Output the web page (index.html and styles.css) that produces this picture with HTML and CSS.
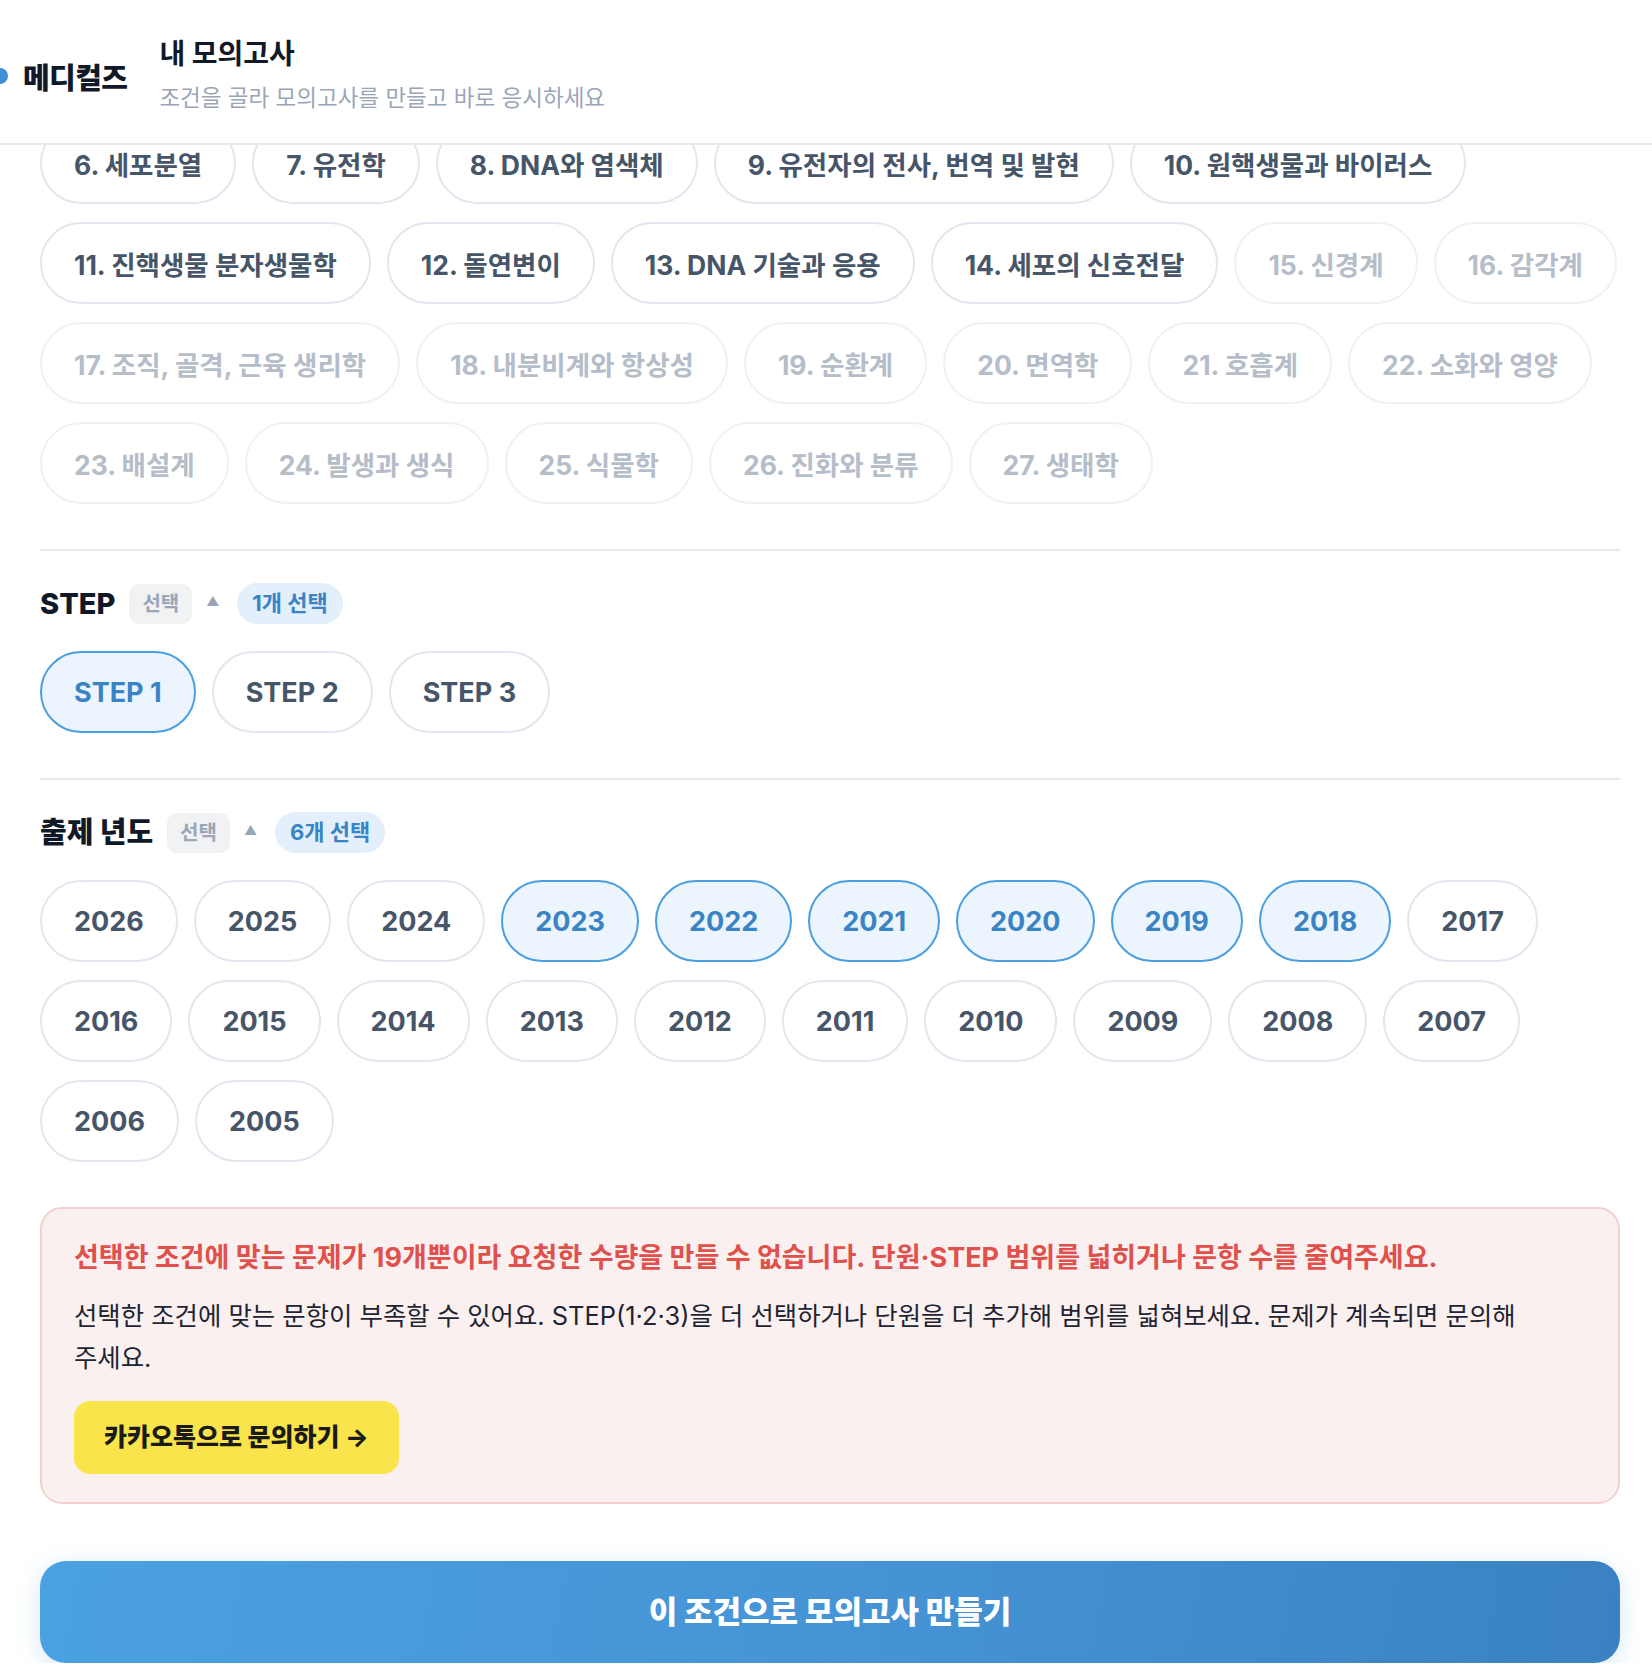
FILE: index.html
```html
<!DOCTYPE html>
<html lang="ko">
<head>
    <meta charset="UTF-8">
    <meta name="viewport" content="width=device-width, initial-scale=1.0">
    <title>내 모의고사 - 메디컬즈</title>
    <link rel="stylesheet" href="styles.css">
</head>
<body>

    <!-- 상단 바 -->
    <header class="topbar">
        <div class="brand">
            <span class="brand-dot"></span>
            <span class="brand-name">메디컬즈</span>
        </div>
        <div class="page-head">
            <h1 class="page-title">내 모의고사</h1>
            <p class="page-sub">조건을 골라 모의고사를 만들고 바로 응시하세요</p>
        </div>
    </header>

    <main class="content">

        <!-- 단원 목록 -->
        <div class="chip-grid">
            <button class="chip">6. 세포분열</button>
            <button class="chip">7. 유전학</button>
            <button class="chip">8. DNA와 염색체</button>
            <button class="chip">9. 유전자의 전사, 번역 및 발현</button>
            <button class="chip">10. 원핵생물과 바이러스</button>
            <button class="chip">11. 진핵생물 분자생물학</button>
            <button class="chip">12. 돌연변이</button>
            <button class="chip">13. DNA 기술과 응용</button>
            <button class="chip">14. 세포의 신호전달</button>
            <button class="chip is-off">15. 신경계</button>
            <button class="chip is-off">16. 감각계</button>
            <button class="chip is-off">17. 조직, 골격, 근육 생리학</button>
            <button class="chip is-off">18. 내분비계와 항상성</button>
            <button class="chip is-off">19. 순환계</button>
            <button class="chip is-off">20. 면역학</button>
            <button class="chip is-off">21. 호흡계</button>
            <button class="chip is-off">22. 소화와 영양</button>
            <button class="chip is-off">23. 배설계</button>
            <button class="chip is-off">24. 발생과 생식</button>
            <button class="chip is-off">25. 식물학</button>
            <button class="chip is-off">26. 진화와 분류</button>
            <button class="chip is-off">27. 생태학</button>
        </div>

        <!-- STEP 선택 -->
        <section class="filter">
            <div class="filter-head">
                <h2 class="filter-title">STEP</h2>
                <span class="tag-muted">선택</span>
                <span class="caret">▲</span>
                <span class="tag-count">1개 선택</span>
            </div>
            <div class="chip-grid">
                <button class="chip is-on">STEP 1</button>
                <button class="chip">STEP 2</button>
                <button class="chip">STEP 3</button>
            </div>
        </section>

        <!-- 출제 년도 선택 -->
        <section class="filter">
            <div class="filter-head">
                <h2 class="filter-title">출제 년도</h2>
                <span class="tag-muted">선택</span>
                <span class="caret">▲</span>
                <span class="tag-count">6개 선택</span>
            </div>
            <div class="chip-grid" id="yearGrid"></div>
        </section>

        <!-- 경고 안내 -->
        <div class="notice">
            <p class="notice-title">선택한 조건에 맞는 문제가 19개뿐이라 요청한 수량을 만들 수 없습니다. 단원·STEP 범위를 넓히거나 문항 수를 줄여주세요.</p>
            <p class="notice-body">선택한 조건에 맞는 문항이 부족할 수 있어요. STEP(1·2·3)을 더 선택하거나 단원을 더 추가해 범위를 넓혀보세요. 문제가 계속되면 문의해 주세요.</p>
            <a class="kakao-btn" href="#">카카오톡으로 문의하기 →</a>
        </div>

        <button class="submit-btn">이 조건으로 모의고사 만들기</button>
    </main>

    <script>
        // 출제 년도 칩 만들기 (2026 ~ 2005)
        const selectedYears = [2023, 2022, 2021, 2020, 2019, 2018];
        const yearGrid = document.getElementById('yearGrid');

        for (let year = 2026; year >= 2005; year--) {
            const chip = document.createElement('button');
            chip.className = 'chip';
            if (selectedYears.includes(year)) chip.classList.add('is-on');
            chip.textContent = year;
            yearGrid.appendChild(chip);
        }
    </script>
</body>
</html>
```

FILE: styles.css
```css
body {
    margin: 0;
    font-family: Inter, "Noto Sans CJK KR", sans-serif;
    background-color: #fff;
    color: #111827;
    overflow: hidden;
    word-break: keep-all;
}

/* 상단 바 */
.topbar {
    position: sticky;
    top: 0;
    z-index: 10;
    height: 143px;
    display: flex;
    align-items: center;
    gap: 32px;
    background-color: #fff;
    border-bottom: 2px solid #e5e9f0;
}
.brand {
    display: flex;
    align-items: center;
    gap: 15px;
    margin-left: -8px;
    padding-top: 8px;
}
.brand-dot {
    width: 16px;
    height: 16px;
    border-radius: 50%;
    background-color: #3f8fd6;
}
.brand-name {
    font-size: 29px;
    font-weight: 800;
    letter-spacing: -0.02em;
}
.page-title {
    margin: 0;
    font-size: 28px;
    font-weight: 700;
}
.page-sub {
    margin: 8px 0 0;
    font-size: 22.5px;
    color: #9aa5b8;
}

.content {
    margin-top: -23px;
    padding: 0 32px 0 40px;
}

/* 칩 */
.chip-grid {
    display: flex;
    flex-wrap: wrap;
    gap: 18px 16px;
    margin-right: -6px;
}
.chip {
    height: 82px;
    padding: 0 32px;
    border: 2px solid #e2e7ef;
    border-radius: 999px;
    background-color: #fff;
    font-family: inherit;
    font-size: 26.5px;
    font-weight: 700;
    color: #475569;
}
.chip.is-off {
    color: #b5bdc9;
    border-color: #eef1f5;
}
.chip.is-on {
    color: #3a84c5;
    background-color: #ecf5fd;
    border-color: #4a9fe0;
}

/* 필터 섹션 */
.filter {
    margin-top: 45px;
    padding-top: 32px;
    border-top: 2px solid #e5e9f0;
}
.filter .chip {
    font-size: 27px;
}
.filter-head {
    display: flex;
    align-items: center;
    gap: 14px;
    margin-bottom: 27px;
}
.filter-title {
    margin: 0;
    font-size: 29px;
    font-weight: 800;
    line-height: 40px;
}
.tag-muted {
    padding: 0 13px;
    line-height: 40px;
    border-radius: 10px;
    background-color: #f1f2f4;
    color: #9aa5b8;
    font-size: 20px;
    font-weight: 700;
}
.caret {
    font-size: 13px;
    line-height: 20px;
    color: #9aa5b8;
    margin-top: -6px;
    margin-right: 4px;
}
.tag-count {
    padding: 0 15px;
    line-height: 41px;
    border-radius: 999px;
    background-color: #e3f0fc;
    color: #3a84c5;
    font-size: 22px;
    font-weight: 700;
}

/* 경고 안내 */
.notice {
    margin-top: 45px;
    padding: 32px 48px 28px 32px;
    border: 2px solid #f3d0d0;
    border-radius: 22px;
    background-color: #fbf0f0;
}
.notice-title {
    margin: 0 0 20px;
    font-size: 27px;
    font-weight: 700;
    line-height: 34px;
    color: #e0504c;
}
.notice-body {
    margin: 0 0 22px;
    font-size: 25.4px;
    line-height: 42px;
    color: #1f2433;
}
.kakao-btn {
    display: inline-block;
    padding: 0 30px;
    line-height: 73px;
    border-radius: 16px;
    background-color: #f9e54b;
    color: #1a1a1a;
    font-size: 25px;
    font-weight: 800;
    text-decoration: none;
}

/* 만들기 버튼 */
.submit-btn {
    display: block;
    width: 100%;
    height: 102px;
    margin-top: 57px;
    padding: 0 0 6px;
    border: none;
    border-radius: 26px;
    background: linear-gradient(100deg, #4aa1e1 0%, #4694d6 50%, #3a82c2 100%);
    box-shadow: 0 6px 24px rgba(74, 150, 220, 0.22);
    color: #fff;
    font-family: inherit;
    font-size: 31px;
    font-weight: 800;
}
```
